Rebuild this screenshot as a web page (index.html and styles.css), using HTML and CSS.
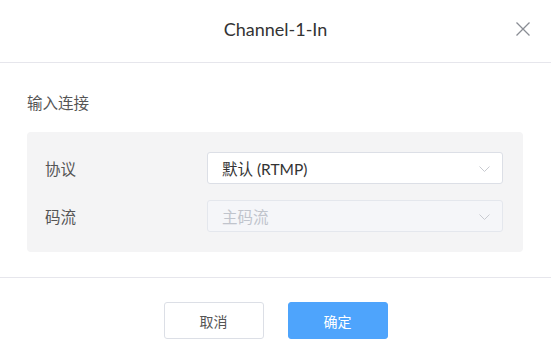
FILE: index.html
```html
<!DOCTYPE html>
<html>
<head>
  <meta charset="utf-8">
  <title>Channel-1-In</title>
  <link rel="stylesheet" href="styles.css">
</head>
<body>
  <div class="dialog">
    <div class="dialog-header">
      <span class="dialog-title">Channel-1-In</span>
      <span class="close-btn">
        <svg width="14" height="14" viewBox="0 0 14 14"><path d="M0.5 0.5 L13.5 13.5 M13.5 0.5 L0.5 13.5" stroke="#8a8d94" stroke-width="1.3" fill="none"/></svg>
      </span>
    </div>

    <div class="dialog-body">
      <div class="section-title">输入连接</div>
      <div class="panel">
        <div class="form-row">
          <label class="form-label">协议</label>
          <div class="select">
            <span>默认 (RTMP)</span>
            <svg class="arrow" width="11" height="6" viewBox="0 0 11 6"><path d="M0.5 0.5 L5.5 5.5 L10.5 0.5" stroke="#c8cad0" stroke-width="1" fill="none"/></svg>
          </div>
        </div>
        <div class="form-row">
          <label class="form-label">码流</label>
          <div class="select disabled">
            <span>主码流</span>
            <svg class="arrow" width="11" height="6" viewBox="0 0 11 6"><path d="M0.5 0.5 L5.5 5.5 L10.5 0.5" stroke="#c8cad0" stroke-width="1" fill="none"/></svg>
          </div>
        </div>
      </div>
    </div>

    <div class="dialog-footer">
      <button class="btn">取消</button>
      <button class="btn btn-primary">确定</button>
    </div>
  </div>
</body>
</html>
```

FILE: styles.css
```css
body {
  margin: 0;
  background: #fff;
  font-family: Lato, "Noto Sans CJK SC", sans-serif;
  color: #333;
}

.dialog {
  width: 551px;
}

.dialog-header {
  position: relative;
  height: 62px;
  border-bottom: 1px solid #e6e6ec;
  display: flex;
  align-items: center;
  justify-content: center;
}

.dialog-title {
  font-size: 18px;
  color: #333;
  margin-top: -4px;
}

.close-btn {
  position: absolute;
  right: 21px;
  top: 22px;
  width: 14px;
  height: 14px;
  display: flex;
}

.dialog-body {
  padding: 30px 28px 25px 27px;
}

.section-title {
  font-size: 15.5px;
  line-height: 20px;
  color: #555;
  margin-bottom: 19px;
}

.panel {
  background: #f4f4f5;
  border-radius: 4px;
  padding: 20px 20px 20px 18px;
  display: flex;
  flex-direction: column;
  gap: 16px;
}

.form-row {
  display: flex;
  align-items: center;
}

.form-label {
  width: 162px;
  font-size: 15.5px;
  color: #555;
}

.select {
  flex: 1;
  height: 30px;
  border: 1px solid #dcdfe6;
  border-radius: 3px;
  background: #fff;
  display: flex;
  align-items: center;
  justify-content: space-between;
  padding: 0 12px 0 14px;
  font-size: 15.5px;
  color: #333;
}

.select.disabled {
  background: #f5f6f9;
  border-color: #e4e7ed;
  color: #c0c4cc;
}

.arrow {
  margin-top: 1px;
}

.dialog-footer {
  border-top: 1px solid #e6e6ec;
  padding-top: 24px;
  display: flex;
  justify-content: center;
  gap: 24px;
}

.btn {
  width: 100px;
  height: 37px;
  border: 1px solid #dcdfe6;
  border-radius: 3px;
  background: #fff;
  font-family: "Noto Sans CJK SC", sans-serif;
  font-size: 14px;
  color: #555;
  cursor: pointer;
}

.btn-primary {
  background: #4ea4fc;
  border-color: #4ea4fc;
  color: #fff;
}
```
